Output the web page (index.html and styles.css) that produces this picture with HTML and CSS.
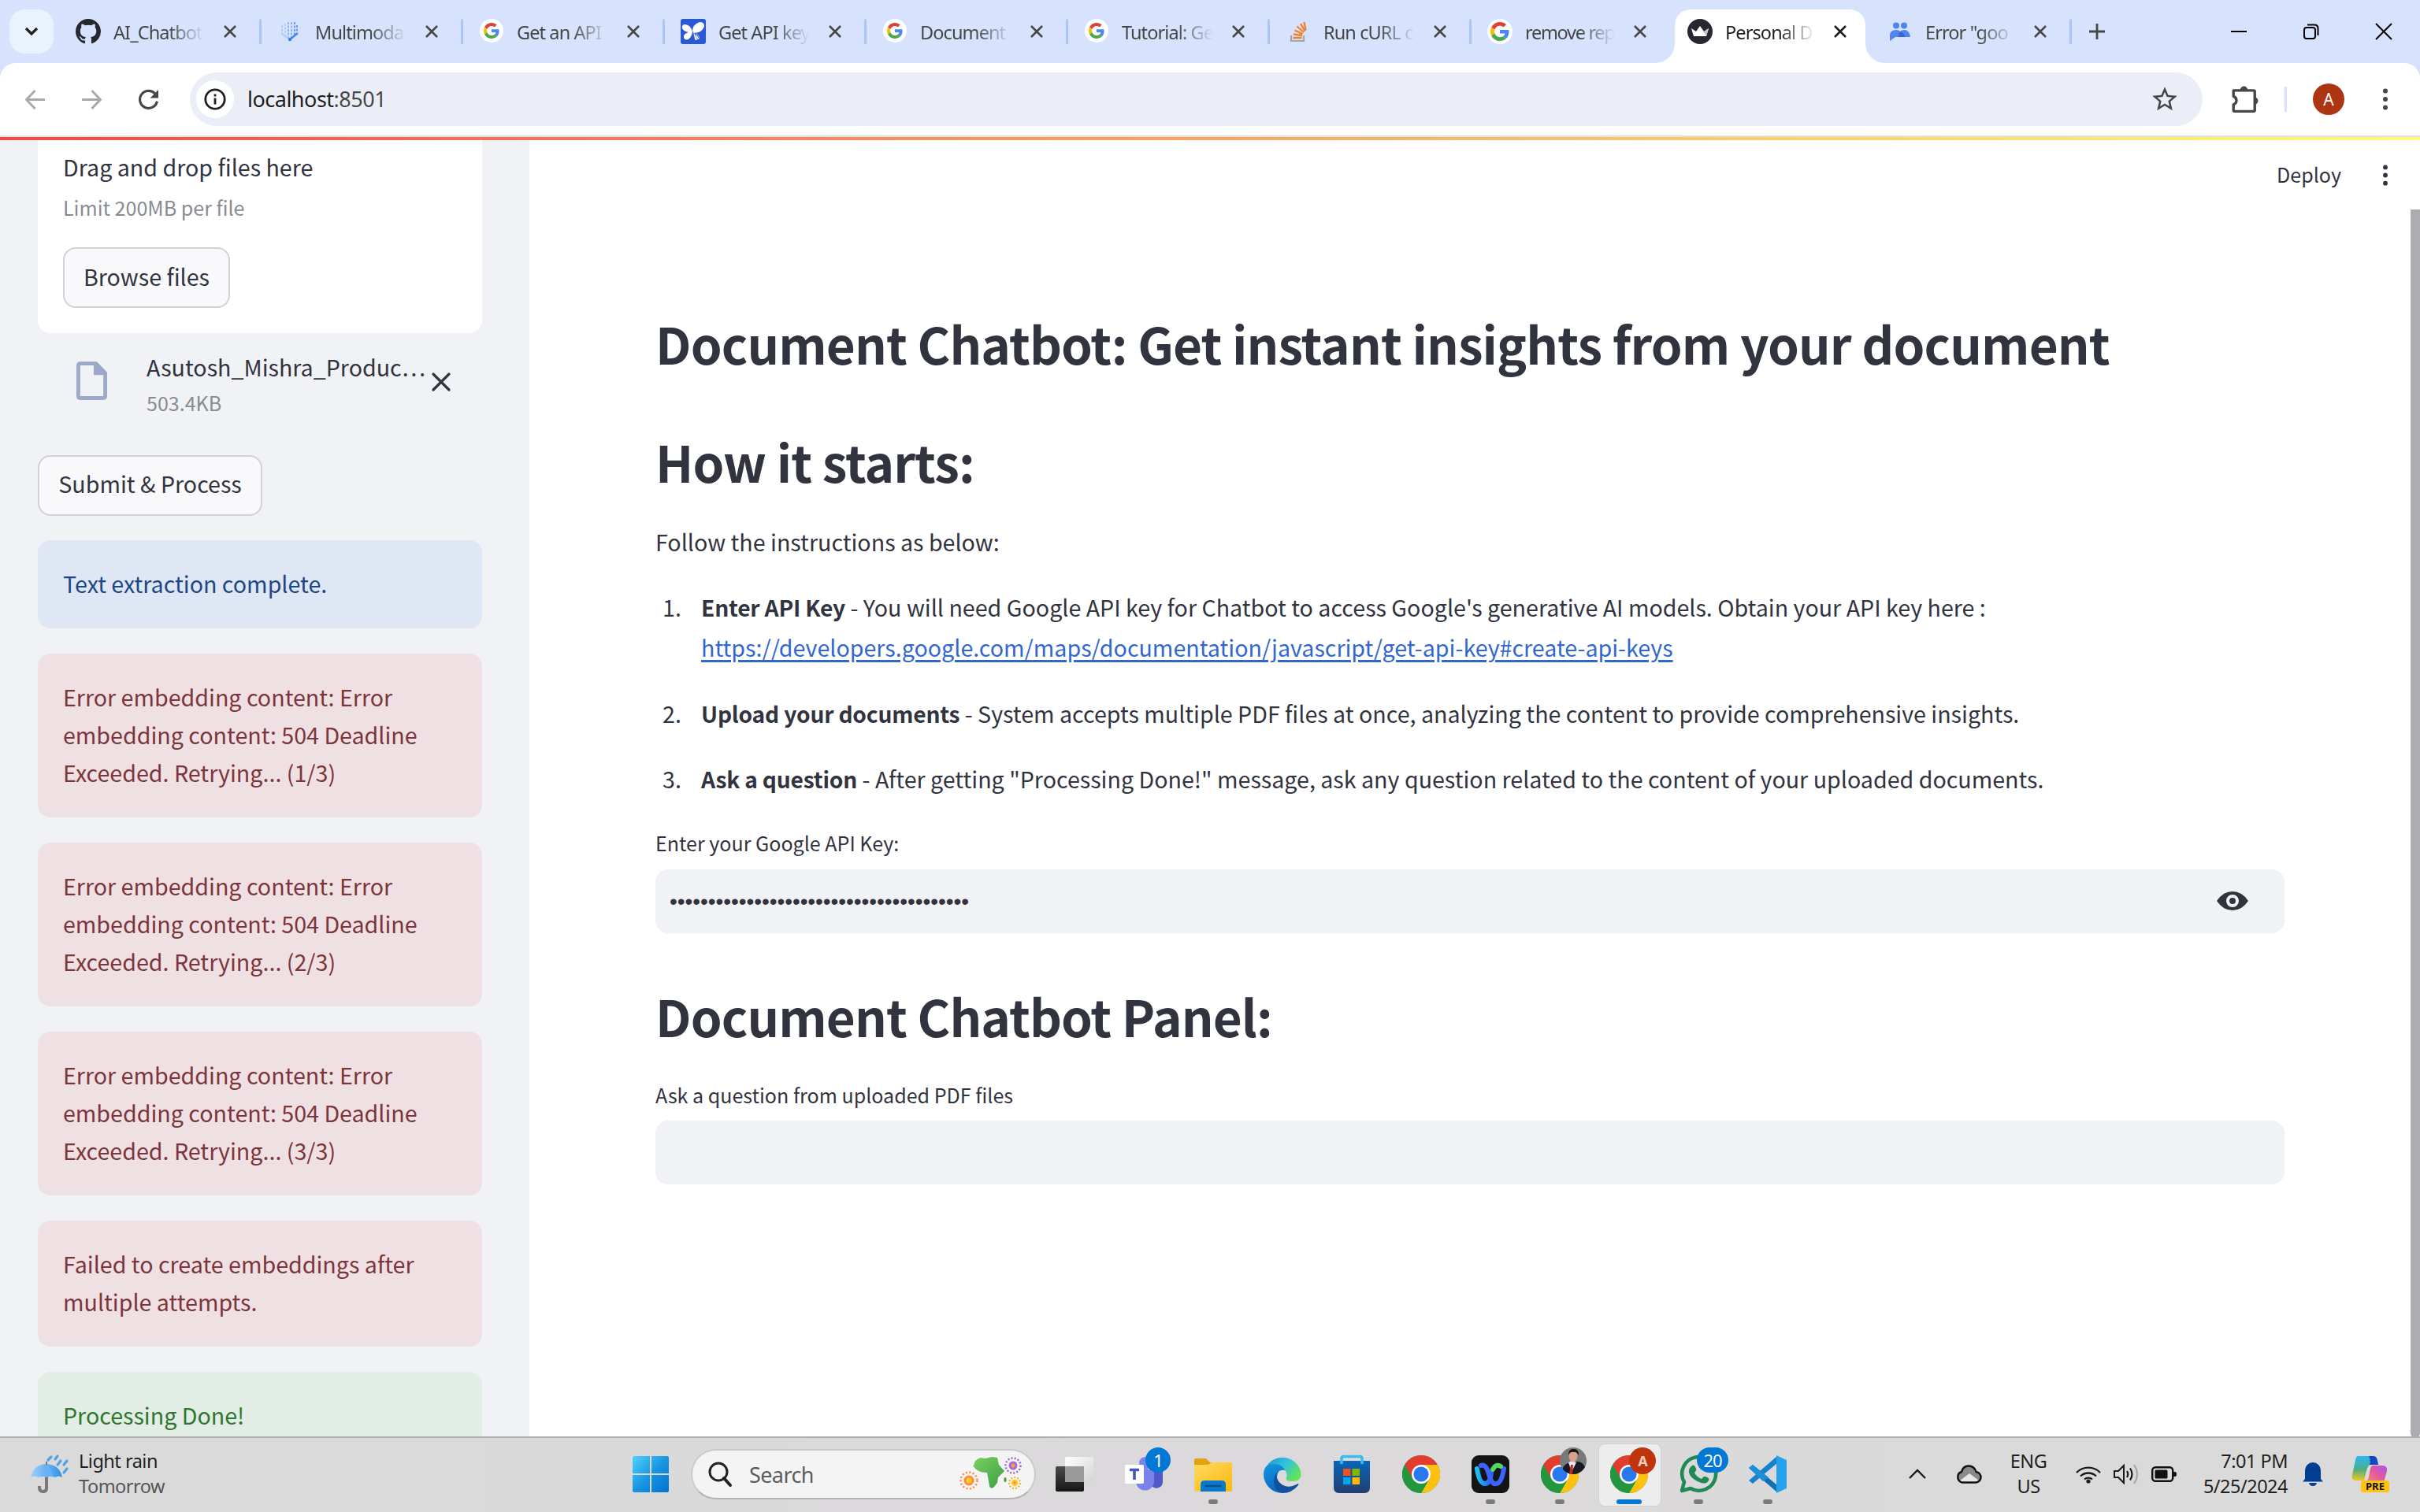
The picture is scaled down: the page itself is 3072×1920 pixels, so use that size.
FILE: index.html
```html
<!DOCTYPE html>
<html lang="en">
<head>
<meta charset="utf-8">
<title>Personal Document Chatbot</title>
<link rel="stylesheet" href="styles.css">
</head>
<body>
<svg class="defs" aria-hidden="true">
  <defs>
    <symbol id="x" viewBox="0 0 16 16"><path d="M1 1l14 14M15 1L1 15" fill="none" stroke="currentColor" stroke-width="2.6"/></symbol>
    <symbol id="google" viewBox="0 0 48 48">
      <path fill="#de4032" d="M24 9.5c3.54 0 6.71 1.22 9.21 3.6l6.85-6.85C35.9 2.38 30.47 0 24 0 14.62 0 6.51 5.38 2.56 13.22l7.98 6.19C12.43 13.72 17.74 9.5 24 9.5z"/>
      <path fill="#4a86f5" d="M46.98 24.55c0-1.57-.15-3.09-.38-4.55H24v9.02h12.94c-.58 2.96-2.26 5.48-4.78 7.18l7.73 6c4.51-4.18 7.09-10.36 7.09-17.65z"/>
      <path fill="#f7bb05" d="M10.53 28.59c-.48-1.45-.76-2.99-.76-4.59s.27-3.14.76-4.59l-7.98-6.19C.92 16.46 0 20.12 0 24c0 3.88.92 7.54 2.56 10.78l7.97-6.19z"/>
      <path fill="#4aa84e" d="M24 48c6.48 0 11.93-2.13 15.89-5.81l-7.73-6c-2.15 1.45-4.92 2.3-8.16 2.3-6.26 0-11.57-4.22-13.47-9.91l-7.98 6.19C6.51 42.62 14.62 48 24 48z"/>
    </symbol>
    <symbol id="google-disc" viewBox="0 0 32 32"><circle cx="16" cy="15" r="15" fill="#fff"/><use href="#google" x="6" y="5" width="20" height="20"/></symbol>
    <symbol id="chrome" viewBox="0 0 48 48">
      <circle cx="24" cy="24" r="24" fill="#1f9d48"/>
      <path d="M3.2 12A24 24 0 0 1 44.8 12H24L13.6 30z" fill="#e33b2e"/>
      <path d="M44.8 12A24 24 0 0 1 24 48L34.4 30 24 12z" fill="#fdc110"/>
      <path d="M3.2 12L13.6 30 24 36 34.4 30 24 48A24 24 0 0 1 3.2 12z" fill="#24963f"/>
      <circle cx="24" cy="24" r="12" fill="#fff"/><circle cx="24" cy="24" r="9.6" fill="#2a78ee"/>
    </symbol>
    <symbol id="dots" viewBox="0 0 6 28"><circle cx="3" cy="3.5" r="3" fill="currentColor"/><circle cx="3" cy="14" r="3" fill="currentColor"/><circle cx="3" cy="24.5" r="3" fill="currentColor"/></symbol>
    <linearGradient id="winG" x1="0" y1="0" x2="1" y2="1"><stop offset="0" stop-color="#4fd3ff"/><stop offset=".5" stop-color="#1896e2"/><stop offset="1" stop-color="#0072cf"/></linearGradient>
    <linearGradient id="darkG" x1="0" y1="0" x2="0" y2="1"><stop offset="0" stop-color="#4a4a4a"/><stop offset="1" stop-color="#161616"/></linearGradient>
    <linearGradient id="glassG" x1="0" y1="0" x2="1" y2="1"><stop offset="0" stop-color="#fff"/><stop offset="1" stop-color="#d4d4d4"/></linearGradient>
    <linearGradient id="folderG" x1="0" y1="0" x2="1" y2="1"><stop offset="0" stop-color="#ffdb60"/><stop offset="1" stop-color="#fbb710"/></linearGradient>
    <linearGradient id="edgeTop" x1="0" y1="0" x2="1" y2=".6"><stop offset="0" stop-color="#1d8ed6"/><stop offset=".55" stop-color="#33c3dc"/><stop offset="1" stop-color="#62e455"/></linearGradient>
    <linearGradient id="edgeMid" x1="0" y1="0" x2=".3" y2="1"><stop offset="0" stop-color="#1596de"/><stop offset="1" stop-color="#0a68c4"/></linearGradient>
    <linearGradient id="storeG" x1="0" y1="0" x2="0" y2="1"><stop offset="0" stop-color="#0767b9"/><stop offset="1" stop-color="#233e70"/></linearGradient>
    <linearGradient id="webexL" x1="0" y1="0" x2="1" y2="0"><stop offset="0" stop-color="#17c3f0"/><stop offset="1" stop-color="#2a5bff"/></linearGradient>
    <linearGradient id="copA" x1="0" y1="0" x2="0" y2="1"><stop offset="0" stop-color="#2bb7f2"/><stop offset=".55" stop-color="#4cae86"/><stop offset="1" stop-color="#f2c61c"/></linearGradient>
    <linearGradient id="copB" x1="1" y1="0" x2="0" y2="1"><stop offset="0" stop-color="#a455ee"/><stop offset=".5" stop-color="#e5599c"/><stop offset="1" stop-color="#fb8a62"/></linearGradient>
    <linearGradient id="africaG" x1="0" y1="0" x2="1" y2="1"><stop offset="0" stop-color="#78d35f"/><stop offset="1" stop-color="#3f9c45"/></linearGradient>
    <linearGradient id="umbG" x1="0" y1="0" x2="1" y2="0"><stop offset="0" stop-color="#9bd0fc"/><stop offset="1" stop-color="#2f92e8"/></linearGradient>
  </defs>
</svg>

<header class="tabstrip">
  <div class="tab-search"><svg width="18" height="12" viewBox="0 0 18 12"><path d="M2 2l7 7 7-7" fill="none" stroke="#1f1f1f" stroke-width="3.2"/></svg></div>
  <div class="tab"><svg class="fav" viewBox="0 0 16 16"><path fill="#24292f" d="M8 0C3.58 0 0 3.58 0 8c0 3.54 2.29 6.53 5.47 7.59.4.07.55-.17.55-.38 0-.19-.01-.82-.01-1.49-2.01.37-2.53-.49-2.69-.94-.09-.23-.48-.94-.82-1.13-.28-.15-.68-.52-.01-.53.63-.01 1.08.58 1.23.82.72 1.21 1.87.87 2.33.66.07-.52.28-.87.51-1.07-1.78-.2-3.64-.89-3.64-3.95 0-.87.31-1.59.82-2.15-.08-.2-.36-1.02.08-2.12 0 0 .67-.21 2.2.82.64-.18 1.32-.27 2-.27.68 0 1.36.09 2 .27 1.53-1.04 2.2-.82 2.2-.82.44 1.1.16 1.92.08 2.12.51.56.82 1.27.82 2.15 0 3.07-1.87 3.75-3.65 3.95.29.25.54.73.54 1.48 0 1.07-.01 1.93-.01 2.2 0 .21.15.46.55.38A8.013 8.013 0 0016 8c0-4.42-3.58-8-8-8z"/></svg><span class="tab-title">AI_Chatbot</span><svg class="tab-x"><use href="#x"/></svg></div>
  <div class="tab"><svg class="fav" viewBox="0 0 32 32"><g fill="none" stroke-width="2"><path d="M6 8v12M10 6v16" stroke="#b4ccfa" stroke-dasharray="3 1.5"/><path d="M14 4v20M18 4v20" stroke="#8fb3f8" stroke-dasharray="3 1.5"/><path d="M22 4v16M25 8v8" stroke="#6d9cf5" stroke-dasharray="3 1.5"/><path d="M6 19l10 7" stroke="#b4ccfa" stroke-width="2.4"/><path d="M26 18l-10 8" stroke="#4a85f1" stroke-width="2.600"/></g><circle cx="16" cy="26" r="2.2" fill="#3f7df0"/></svg><span class="tab-title">Multimoda</span><svg class="tab-x"><use href="#x"/></svg></div>
  <div class="tab"><svg class="fav"><use href="#google-disc"/></svg><span class="tab-title">Get an API</span><svg class="tab-x"><use href="#x"/></svg></div>
  <div class="tab"><svg class="fav" viewBox="0 0 32 32"><rect width="32" height="32" rx="3" fill="#2b59d4"/><g fill="#fff"><path d="M15 16Q13 8 6 7 1 7 2 12q2 4 8 5-7 2-6 7 3 5 8 0 3-4 3-8z"/><path d="M15 16Q15 7 24 4q6 0 6 5-1 5-7 8l-6 1 4 8q-1 2-3 0z"/><path d="M20 18l4 5q0 3-2 3-3-3-3-7z"/></g><path d="M15.500 16l2 11M19.500 18.500l4 6" stroke="#2b59d4" stroke-width="1.200" fill="none"/></svg><span class="tab-title">Get API key</span><svg class="tab-x"><use href="#x"/></svg></div>
  <div class="tab"><svg class="fav"><use href="#google-disc"/></svg><span class="tab-title">Document</span><svg class="tab-x"><use href="#x"/></svg></div>
  <div class="tab"><svg class="fav"><use href="#google-disc"/></svg><span class="tab-title">Tutorial: Ge</span><svg class="tab-x"><use href="#x"/></svg></div>
  <div class="tab"><svg class="fav" viewBox="0 0 32 32"><path d="M7 21v7h16v-7" fill="none" stroke="#a3a5a8" stroke-width="2.200"/><path d="M9.500 24h11M10 19.500l11 1.500M11.500 14.500l10 4.500M14.500 9.500l8.500 7.500M19 6l5.500 9.500M23.500 4l2 10.500" fill="none" stroke="#ee8027" stroke-width="2.300"/></svg><span class="tab-title">Run cURL c</span><svg class="tab-x"><use href="#x"/></svg></div>
  <div class="tab narrow plain"><svg class="fav" viewBox="0 0 32 32"><circle cx="16" cy="16" r="16" fill="#fff"/><use href="#google" x="4" y="4" width="24" height="24"/></svg><span class="tab-title tight">remove rep</span><svg class="tab-x"><use href="#x"/></svg></div>
  <div class="tab narrow plain active"><svg class="fav" viewBox="0 0 32 32"><circle cx="16" cy="16" r="16" fill="#262730"/><path d="M5 12l6 4 5-7 5 7 6-4-3 10H8z" fill="#fff"/><path d="M16 9l5 7 6-4-3 10z" fill="#c4c4c8"/></svg><span class="tab-title">Personal D</span><svg class="tab-x"><use href="#x"/></svg></div>
  <div class="tab narrow"><svg class="fav" viewBox="0 0 32 32"><g fill="#4f86ee"><circle cx="11" cy="8.500" r="4"/><circle cx="21" cy="8.500" r="4"/><path d="M3 28V20q1-6 8-6 4 0 5 2 2-2 5-2 7 0 8 9H10z"/></g><path d="M16 16q-2 3-2 7h9q-2-5-7-7z" fill="#3568d4"/></svg><span class="tab-title">Error "goo</span><svg class="tab-x"><use href="#x"/></svg></div>
  <svg class="new-tab" viewBox="0 0 20 20"><path d="M10 0v20M0 10h20" stroke="#444746" stroke-width="2.800"/></svg>
  <div class="win-controls">
    <svg width="20" height="20" viewBox="0 0 20 20"><path d="M0 10h20" stroke="#000" stroke-width="2"/></svg>
    <svg width="20" height="20" viewBox="0 0 20 20"><rect x="1" y="5" width="14" height="14" rx="3" fill="none" stroke="#000" stroke-width="2"/><path d="M5 1.500h9q4.500 0 4.500 4.500v9" fill="none" stroke="#000" stroke-width="2"/></svg>
    <svg width="20" height="20" viewBox="0 0 20 20"><path d="M0 0l20 20M20 0L0 20" stroke="#000" stroke-width="2"/></svg>
  </div>
</header>

<div class="toolbar-bg">
<nav class="toolbar">
  <svg class="nav-icon" viewBox="0 0 24 24"><path d="M24 12H2M12 1L1.500 12 12 23" fill="none" stroke="#a8aaa9" stroke-width="2.800"/></svg>
  <svg class="nav-icon" viewBox="0 0 24 24"><path d="M0 12h22M12 1l10.500 11L12 23" fill="none" stroke="#a8aaa9" stroke-width="2.800"/></svg>
  <svg class="nav-icon" viewBox="0 0 24 24"><path d="M22.500 14A10.600 10.600 0 1 1 20 4.800L23 8" fill="none" stroke="#444746" stroke-width="3"/><path d="M24 0v10H14z" fill="#444746"/></svg>
  <div class="omnibox">
    <span class="site-info"><svg width="28" height="28" viewBox="0 0 28 28"><circle cx="14" cy="14" r="12.200" fill="none" stroke="#1f1f1f" stroke-width="2.800"/><path d="M14 12.500v8M14 7.500v3" stroke="#1f1f1f" stroke-width="2.800"/></svg></span>
    <span class="url">localhost<span class="port">:8501</span></span>
    <svg class="star" viewBox="0 0 24 24"><path fill="#444746" fill-rule="evenodd" d="M22 9.240l-7.190-.62L12 2 9.190 8.630 2 9.240l5.460 4.730L5.820 21 12 17.270 18.180 21l-1.630-7.030L22 9.240zM12 15.400l-3.760 2.270 1-4.280-3.320-2.880 4.380-.38L12 6.100l1.710 4.040 4.380.38-3.320 2.880 1 4.280L12 15.400z"/></svg>
  </div>
  <svg class="puzzle" viewBox="0 0 34 34"><path d="M4 6.500h24q1.500 0 1.500 1.500v22q0 1.500-1.500 1.500H5.500Q4 31.500 4 30v-6.500a5.300 5.300 0 0 0 0-10z" fill="none" stroke="#444746" stroke-width="3.200" stroke-linejoin="round"/><path d="M12 6a4.500 4.500 0 0 1 9 0zM29 14.500a4.500 4.500 0 0 1 0 9z" fill="#444746"/></svg>
  <span class="bar-sep"></span>
  <span class="avatar">A</span>
  <svg class="menu-dots"><use href="#dots"/></svg>
</nav>
</div>
<div class="edge-line"></div>
<div class="run-line"></div>

<div class="app">
  <aside class="sidebar">
    <section class="dropzone">
      <p class="src drop-title">Drag and drop files here</p>
      <p class="src drop-limit">Limit 200MB per file</p>
      <button class="src btn browse">Browse files</button>
    </section>
    <div class="file">
      <svg class="file-icon" viewBox="0 0 40 50"><path d="M5 2.500h20.500L37.500 15v30q0 2.500-2.500 2.500H5Q2.500 47.500 2.500 45V5Q2.500 2.500 5 2.500z" fill="none" stroke="#9da9c8" stroke-width="5"/><path d="M22.500 2v15.500H38L25 2z" fill="#9da9c8"/></svg>
      <div class="file-text"><p class="src file-name">Asutosh_Mishra_Produc…</p><p class="src file-size">503.4KB</p></div>
      <svg class="file-x" viewBox="0 0 24 24"><path d="M2 2l20 20M22 2L2 22" stroke="#31333f" stroke-width="3.200" stroke-linecap="round"/></svg>
    </div>
    <button class="src btn submit">Submit &amp; Process</button>
    <div class="alerts">
      <div class="src alert info">Text extraction complete.</div>
      <div class="src alert error">Error embedding content: Error<br>embedding content: 504 Deadline<br>Exceeded. Retrying... (1/3)</div>
      <div class="src alert error">Error embedding content: Error<br>embedding content: 504 Deadline<br>Exceeded. Retrying... (2/3)</div>
      <div class="src alert error">Error embedding content: Error<br>embedding content: 504 Deadline<br>Exceeded. Retrying... (3/3)</div>
      <div class="src alert error">Failed to create embeddings after<br>multiple attempts.</div>
      <div class="src alert success">Processing Done!</div>
    </div>
  </aside>
  <main class="main">
    <div class="app-head"><span class="src deploy">Deploy</span><svg class="menu-dots dark"><use href="#dots"/></svg></div>
    <h2 class="src heading">Document Chatbot: Get instant insights from your document</h2>
    <h2 class="src heading how">How it starts:</h2>
    <p class="src body">Follow the instructions as below:</p>
    <ol class="src steps">
      <li><span class="num">1.</span><div><b>Enter API Key</b> - You will need Google API key for Chatbot to access Google's generative AI models. Obtain your API key here :<br><a href="#">https://developers.google.com/maps/documentation/javascript/get-api-key#create-api-keys</a></div></li>
      <li><span class="num">2.</span><div><b>Upload your documents</b> - System accepts multiple PDF files at once, analyzing the content to provide comprehensive insights.</div></li>
      <li><span class="num">3.</span><div><b>Ask a question</b> - After getting "Processing Done!" message, ask any question related to the content of your uploaded documents.</div></li>
    </ol>
    <label class="src label first">Enter your Google API Key:</label>
    <div class="field"><span class="secret">•••••••••••••••••••••••••••••••••••••••</span><svg class="eye" viewBox="0 0 40 24"><path d="M0 12Q8 0 20 0T40 12Q32 24 20 24T0 12z" fill="#31333f"/><circle cx="20" cy="12" r="6" fill="none" stroke="#f0f2f6" stroke-width="4"/></svg></div>
    <h2 class="src heading panel">Document Chatbot Panel:</h2>
    <label class="src label">Ask a question from uploaded PDF files</label>
    <div class="field"></div>
  </main>
  <div class="scrollbar"></div>
</div>

<footer class="taskbar">
  <div class="weather">
    <svg width="48" height="48" viewBox="0 0 48 48"><path d="M20 26v16q0 4-4.500 4t-4.500-5v-2" fill="none" stroke="#7d7876" stroke-width="4"/><path d="M0 28Q3 12 20 11q17 1 20 17-5-3-9 0-5-3-11 0-6-3-10 0-5-3-10 0z" fill="url(#umbG)"/><path d="M13 28q0-10 7-17 8 7 8 17-4-2-8 0-4-2-7 0z" fill="#6bb4f5" opacity=".7"/><path d="M20 8v4" stroke="#777" stroke-width="2"/><path d="M22 6l4-4M31 5l3-4M34 12l4-5M42 12l4-5M42 22l4-5" stroke="#4ca4ee" stroke-width="3.200" stroke-linecap="round"/></svg>
    <div class="two-line"><span>Light rain</span><span class="muted">Tomorrow</span></div>
  </div>
  <div class="apps">
    <svg class="start" width="46" height="46" viewBox="0 0 46 46"><path d="M2 0h20v22H0V2q0-2 2-2zM24 0h20q2 0 2 2v20H24zM0 24h22v22H2q-2 0-2-2zM24 24h22v20q0 2-2 2H24z" fill="url(#winG)"/></svg>
    <div class="search">
      <svg width="30" height="32" viewBox="0 0 30 32"><circle cx="13" cy="13" r="11" fill="none" stroke="#222" stroke-width="3"/><path d="M20 21l8 9" stroke="#222" stroke-width="4" stroke-linecap="round"/></svg>
      <span class="search-text">Search</span>
      <svg class="africa" width="80" height="44" viewBox="0 0 80 44"><path d="M18 11Q19 3 27 1l6 1 8-2 7 1 2 9 7 8-8 8-1 7-5 6q-4 2-5-2l-3-17q-13 0-18-9z" fill="url(#africaG)"/><ellipse cx="58" cy="29" rx="1.600" ry="3" fill="#3f9c45"/><g fill="none"><circle cx="12" cy="30" r="10.500" stroke="#ff8a45" stroke-width="2.500" stroke-dasharray="2 2.500"/><circle cx="12" cy="30" r="5" stroke="#ff8a3c" stroke-width="3" fill="#ffc928"/><circle cx="68" cy="11" r="9.500" stroke="#9a6bd6" stroke-width="2.500" stroke-dasharray="2 2.200"/><circle cx="68" cy="11" r="4" stroke="#a06be0" stroke-width="3" fill="#ff9f2e"/><circle cx="70" cy="33" r="7" stroke="#e9b722" stroke-width="2" stroke-dasharray="2 2"/><circle cx="70" cy="33" r="3" stroke="#ffc928" stroke-width="2.500" fill="#ff8a3c"/></g></svg>
    </div>
    <div class="app-cell"><svg viewBox="0 0 48 48"><rect x="0" y="14" width="36" height="32" rx="2" fill="url(#darkG)"/><rect x="12" y="2" width="36" height="32" rx="2" fill="url(#glassG)"/><path d="M12 14h24v20H14q-2 0-2-2z" fill="#9b9a9a"/></svg></div>
    <div class="app-cell"><svg viewBox="0 0 48 48"><path d="M34 20h14v14a8 8 0 0 1-14 5z" fill="#5059c9"/><circle cx="26" cy="10" r="8" fill="#7b83eb"/><path d="M14 18h23v15a11.500 11.500 0 0 1-23 0z" fill="#7b83eb"/><rect x="0" y="12" width="24" height="24" rx="2" fill="#fff"/><path d="M6 18.500h12M12 18v13" stroke="#4b53bc" stroke-width="3.600"/></svg><span class="badge">1</span></div>
    <div class="app-cell run"><svg viewBox="0 0 48 48"><path d="M2 4h13l5 5h26v6H0V6q0-2 2-2z" fill="#e3a30c"/><path d="M0 12h18l4-3h24q2 0 2 2v33q0 2-2 2H2q-2 0-2-2z" fill="url(#folderG)"/><path d="M8 46V37q0-5 5-5h22q5 0 5 5v9z" fill="#0c76c8"/><path d="M15 39h18" stroke="#064f8f" stroke-width="2.400" stroke-linecap="round"/></svg></div>
    <div class="app-cell"><svg viewBox="0 0 48 48"><path d="M1 20A24 24 0 0 1 47 20q3 13-11 13-9 0-7-5 2-4-2-9-7-8-17-3-6 3-9 4z" fill="url(#edgeTop)"/><path d="M0 24q0-13 14-13 9 0 13 8-9-2-10 8-1 10 9 17l-2 4A24 24 0 0 1 0 24z" fill="url(#edgeMid)"/><path d="M19 20q-5 5 0 13 7 9 18 6l7-3q1 0 0 2-8 10-20 10-10-2-11-14 0-9 6-14z" fill="#12519f"/></svg></div>
    <div class="app-cell"><svg viewBox="0 0 48 48"><path d="M1 7h46v34q0 7-7 7H8q-7 0-7-7z" fill="url(#storeG)"/><path d="M11 11V4q0-2.500 3-2.500h20q3 0 3 2.500v7" fill="none" stroke="#35bdf3" stroke-width="3.600"/><path d="M13 17h9.500v9H13z" fill="#f25022"/><path d="M24.500 17H34v9h-9.500z" fill="#7fba00"/><path d="M13 28h9.500v9H13z" fill="#00a4ef"/><path d="M24.500 28H34v9h-9.500z" fill="#ffb900"/></svg></div>
    <div class="app-cell"><svg><use href="#chrome"/></svg></div>
    <div class="app-cell run"><svg viewBox="0 0 48 48"><rect width="48" height="48" rx="9" fill="#141414"/><g fill="none" stroke-width="6" stroke-linecap="round"><path d="M7 17Q10 36 17 36T25 22" stroke="url(#webexL)"/><path d="M12 13Q18 10 22 24T31 36Q38 36 41 17" stroke="#3d63ff"/><path d="M27 18Q31 10 37 14" stroke="#4fd867"/></g></svg></div>
    <div class="app-cell run"><svg><use href="#chrome"/></svg><svg class="photo" viewBox="0 0 34 34"><defs><clipPath id="pc"><circle cx="17" cy="17" r="17"/></clipPath></defs><g clip-path="url(#pc)"><rect width="34" height="34" fill="#777a79"/><path d="M2 34q1-13 11-15l11-1q9 2 10 16z" fill="#181b22"/><path d="M11 19l4-2 6 2-6 12z" fill="#e8eaf0"/><path d="M14 22l3 0-1 12h-4z" fill="#bd2a25"/><ellipse cx="17" cy="11" rx="5.500" ry="7.500" fill="#d9a08c"/><path d="M11 10q0-9 7-8 6 0 6 8-3-5-6-4-5-1-7 4z" fill="#151312"/></g></svg></div>
    <div class="app-cell run current"><svg><use href="#chrome"/></svg><span class="badge user">A</span></div>
    <div class="app-cell run"><svg viewBox="0 0 48 48"><path d="M3 45l3-11A21.500 21.500 0 1 1 14 42z" fill="none" stroke="#1f8a54" stroke-width="4.600" stroke-linejoin="round"/><path d="M16 13q3-2 5 4 1 2-2 5 3 6 9 8 3-4 5-3 6 2 4 5-3 6-12 2-14-6-13-15 1-4 4-6z" fill="#1f8a54"/></svg><span class="badge wide">20</span></div>
    <div class="app-cell run"><svg viewBox="0 0 48 48"><path d="M0 32l5 4L36 10V1z" fill="#1583cc"/><path d="M0 16l5-4 31 26v9z" fill="#0f70b6"/><path d="M0 16l5-4 20 16-7 5z" fill="#1c8fd8"/><path d="M35 0l13 6v36l-13 6z" fill="#27a3ee"/></svg></div>
  </div>
  <div class="tray">
    <svg class="caret" width="22" height="12" viewBox="0 0 22 12"><path d="M1 11L11 1l10 10" fill="none" stroke="#1a1a1a" stroke-width="2.400"/></svg>
    <svg class="cloud" width="32" height="24" viewBox="0 0 32 24"><path d="M8 22.500a7 7 0 0 1-1-13.500Q9 1.500 16 1.500T25.500 9a6.700 6.700 0 0 1-1.500 13.500z" fill="#8a8a8a"/><path d="M5 20l12-9 12 9-4 2H8z" fill="#e8e8e8"/><path d="M8 22.500a7 7 0 0 1-1-13.500Q9 1.500 16 1.500T25.500 9a6.700 6.700 0 0 1-1.500 13.500z" fill="none" stroke="#111" stroke-width="2.400"/></svg>
    <div class="two-line lang"><span>ENG</span><span>US</span></div>
    <svg class="wifi" width="32" height="24" viewBox="0 0 32 24"><g fill="none" stroke="#1a1a1a" stroke-width="2.300"><path d="M1 10a21 21 0 0 1 30 0M6 14.500a14.500 14.500 0 0 1 20 0M11 18.500a7.500 7.500 0 0 1 10 0"/></g><circle cx="16" cy="21" r="2.600" fill="#1a1a1a"/></svg>
    <svg class="vol" width="32" height="26" viewBox="0 0 32 26"><path d="M1 9h5l7-7v22l-7-7H1z" fill="none" stroke="#1a1a1a" stroke-width="2"/><path d="M17 9q2.500 4 0 8M21 5.500q5 7.500 0 15" fill="none" stroke="#1a1a1a" stroke-width="2.200"/><path d="M26 1q8 12 0 24" fill="none" stroke="#a5a5a5" stroke-width="2"/></svg>
    <svg class="batt" width="32" height="20" viewBox="0 0 32 20"><rect x="1.200" y="1.200" width="26" height="17.600" rx="4" fill="none" stroke="#111" stroke-width="2.400"/><rect x="4.500" y="4.500" width="16" height="11" rx="1.500" fill="#111"/><path d="M28 7h2q2 0 2 3t-2 3h-2z" fill="#111"/></svg>
    <div class="two-line clock"><span>7:01 PM</span><span>5/25/2024</span></div>
    <svg class="bell" width="26" height="30" viewBox="0 0 26 30"><path d="M3 21V10a10 10 0 0 1 20 0v11l3 3.500H0zM8 26h10q-1 4-5 4t-5-4z" fill="#003e92"/></svg>
    <div class="copilot"><svg width="46" height="34" viewBox="0 0 46 34"><path d="M8 0h20q4 0 5 6l1 5H24q-3 0-5 8l-3 12H6Q-1 31 1 24L5 5q1-5 3-5z" fill="url(#copA)"/><path d="M22 0h6q4 0 5 6l1 5H23q2-6-1-11z" fill="#1544c4"/><path d="M27 12h12q7 0 6 7l-4 14H17q4-1 5-7l2-10q1-4 3-4z" fill="url(#copB)"/></svg><span class="pre">PRE</span></div>
  </div>
</footer>
</body>
</html>
```
FILE: styles.css
```css
* { box-sizing: border-box; margin: 0; padding: 0; }
html, body { width: 3072px; height: 1920px; overflow: hidden; }
body { display: flex; flex-direction: column; background: #fff; font-family: "Noto Sans", "Open Sans", sans-serif; color: #1f1f1f; }
svg { display: block; flex: none; overflow: visible; }
.defs { position: absolute; width: 0; height: 0; }
.src { font-family: "Noto Sans CJK SC", "Source Sans Pro", sans-serif; font-size: 28.640px; line-height: 48px; color: #31333f; white-space: nowrap; }

/* browser tabs */
.tabstrip { height: 80px; flex: none; display: flex; align-items: center; background: #d7e2fd; padding-left: 12px; }
.tab-search { width: 56px; height: 56px; border-radius: 20px; background: #eaf1ff; display: flex; align-items: center; justify-content: center; margin-right: 8px; }
.tab { width: 256px; height: 80px; flex: none; display: flex; align-items: center; padding-left: 20px; position: relative; color: #444746; }
.tab.narrow { width: 254px; }
.tab::after { content: ""; width: 3px; height: 32px; border-radius: 2px; background: #a8c4fb; margin-left: auto; }
.tab.plain::after { visibility: hidden; }
.fav { width: 32px; height: 32px; margin-right: 16px; }
.tab-title { width: 116px; overflow: hidden; white-space: nowrap; font-size: 23.500px; letter-spacing: -0.9px; line-height: 40px; padding-top: 2px; -webkit-mask-image: linear-gradient(90deg, #000 60%, transparent); mask-image: linear-gradient(90deg, #000 60%, transparent); }
.narrow .tab-title { width: 114px; }
.tab-title.tight { letter-spacing: -1.3px; }
.tab-x { width: 16px; height: 16px; margin-left: 24px; }
.tab.active { color: #1f1f1f; z-index: 0; }
.tab.active::before { content: ""; position: absolute; z-index: -1; left: 4px; right: 8px; top: 12px; bottom: 0; background: #fff; border-radius: 20px 20px 0 0; }
.tab.active::after { visibility: visible; position: absolute; z-index: -1; left: -20px; right: -16px; bottom: 0; width: auto; height: 24px; border-radius: 0; background: radial-gradient(circle at 0 0, transparent 23.500px, #fff 24px) left / 24px 24px no-repeat, radial-gradient(circle at 100% 0, transparent 23.500px, #fff 24px) right / 24px 24px no-repeat; }
.new-tab { width: 20px; height: 20px; margin-left: 22px; }
.win-controls { margin-left: auto; display: flex; gap: 72px; padding-right: 36px; }

/* toolbar */
.toolbar-bg { flex: none; background: #d7e2fd; }
.toolbar { height: 92px; display: flex; align-items: center; background: #fff; border-radius: 20px 20px 0 0; padding-left: 32px; }
.nav-icon { width: 25px; height: 25px; margin-right: 47px; }
.omnibox { width: 2555px; height: 68px; border-radius: 34px; background: #ebeef7; display: flex; align-items: center; padding: 0 34px 0 8px; margin-left: -7px; }
.site-info { width: 48px; height: 48px; border-radius: 50%; background: #fff; display: flex; align-items: center; justify-content: center; }
.url { margin-left: 17px; font-size: 27px; letter-spacing: -0.5px; line-height: 40px; }
.port { color: #474747; }
.star { width: 38px; height: 38px; margin-left: auto; margin-right: -5px; }
.puzzle { width: 36px; height: 36px; margin-left: 35px; }
.bar-sep { width: 3px; height: 32px; background: #d3e1fb; margin-left: 33px; }
.avatar { width: 40px; height: 40px; border-radius: 50%; background: #ae3511; color: #fff; display: flex; align-items: center; justify-content: center; font-size: 21px; margin-left: 33px; }
.menu-dots { width: 6px; height: 28px; margin-left: 49px; color: #444746; }
.menu-dots.dark { color: #31333f; height: 27px; margin-left: 53px; }
.edge-line { height: 2px; flex: none; background: #dfe3df; }
.run-line { height: 4px; flex: none; background: linear-gradient(90deg, #ec4b4b, #f18a5f 33%, #f7c26d 66%, #fdfa80); }

/* page */
.app { height: 1646px; flex: none; display: flex; overflow: hidden; }
.sidebar { width: 672px; flex: none; background: #f0f2f6; padding: 0 60px 0 48px; overflow: hidden; }
.dropzone { height: 245px; background: #fff; border-radius: 0 0 16px 16px; padding: 10px 32px 0; }
.drop-limit { font-size: 25.060px; line-height: 42px; margin-top: 6px; }
.drop-limit, .file-size { color: #898b92; }
.btn { display: flex; align-items: center; justify-content: center; border: 2px solid #d1d2d6; background: #f9f9fb; border-radius: 16px; height: 77px; padding-bottom: 3px; }
.browse { width: 212px; margin-top: 30px; }
.file { display: flex; height: 155px; padding: 19px 0 0 49px; }
.file-icon { width: 39px; height: 49px; margin-top: 17px; }
.file-text { margin-left: 50px; width: 360px; }
.file-size { font-size: 25.060px; line-height: 42px; }
.file-x { width: 24px; height: 24px; margin: 31px 0 0 2px; }
.submit { width: 285px; padding-bottom: 5px; }
.alerts { margin-top: 31px; display: flex; flex-direction: column; gap: 32px; }
.alert { border-radius: 16px; padding: 31px 32px 33px; }
.info { background: #dfe6f4; color: #1c4786; }
.error { background: #efe0e3; color: #7d353b; }
.success { background: #e2ede5; color: #2f772f; }

.main { width: 2388px; flex: none; padding: 0 160px; }
.app-head { height: 88px; margin-right: -160px; display: flex; align-items: center; justify-content: flex-end; padding: 0 29px 0 0; }
.deploy { font-size: 25.060px; margin-top: -2px; }
.heading { font-size: 63.800px; line-height: 86px; font-weight: 700; letter-spacing: -0.900px; margin-top: 126px; }
.how { margin-top: 64px; }
.body { line-height: 51.200px; margin-top: 34px; }
.steps { list-style: none; line-height: 51.200px; margin-top: 32px; display: flex; flex-direction: column; gap: 32px; }
.steps li { display: flex; }
.num { width: 58px; padding-left: 9px; }
.steps b { font-size: 28.200px; line-height: 1; font-weight: 700; letter-spacing: -0.200px; }
.steps a { color: #3267cf; text-decoration: underline; text-decoration-thickness: 3px; text-underline-offset: 4px; }
.label { display: block; font-size: 25.060px; line-height: 42px; margin-top: 35px; }
.field { width: 2068px; height: 81px; border-radius: 16px; background: #f0f2f6; margin-top: 13px; display: flex; align-items: center; padding: 0 46px 0 18px; }
.secret { font-family: "Liberation Sans", Arial, sans-serif; font-size: 28px; line-height: 48px; letter-spacing: -0.060px; color: #31333f; }
.eye { width: 40px; height: 24px; margin: 0 0 1px auto; }
.panel { margin-top: 61px; }
.panel + .label { margin-top: 37px; }
.panel + .label + .field { margin-top: 12px; }
.scrollbar { width: 12px; height: 1560px; margin-top: 88px; background: #acadb1; border-radius: 0 0 6px 6px; }

/* taskbar */
.taskbar { height: 96px; flex: none; border-top: 2px solid #adadad; background: linear-gradient(90deg, #dadada 20%, #dcd9dc 45%, #dbd9da 68%, #dadada 78%); padding-bottom: 2px; display: flex; align-items: center; }
.two-line { display: flex; flex-direction: column; font-size: 23.500px; line-height: 32px; letter-spacing: -0.5px; white-space: nowrap; margin-top: -2px; }
.weather { width: 803px; padding-left: 39px; display: flex; align-items: center; gap: 13px; }
.muted { color: #555; }
.apps { display: flex; align-items: center; height: 92px; }
.search { width: 438px; height: 64px; margin: 0 5px 0 28px; border-radius: 32px; background: #f4f4f4; border: 2px solid #cbcacb; border-bottom-color: #b4b3b4; display: flex; align-items: center; padding: 0 15px 0 20px; }
.search-text { font-size: 27px; letter-spacing: -0.6px; margin-left: 22px; color: #5c5c5c; }
.africa { margin-left: auto; }
.app-cell { width: 88px; height: 92px; display: flex; align-items: center; justify-content: center; position: relative; }
.app-cell > svg { width: 48px; height: 48px; }
.app-cell.run::after { content: ""; position: absolute; left: 38px; bottom: 8px; width: 12px; height: 6px; border-radius: 3px; background: #7c7b7c; }
.app-cell.current::before { content: ""; position: absolute; left: 5px; top: 7px; width: 78px; height: 78px; border-radius: 8px; background: #ededed; border: 1px solid #d2d1d2; }
.app-cell.current > svg { position: relative; }
.app-cell.current::after { left: 28px; width: 32px; background: #0078d4; }
.badge { position: absolute; left: 46px; top: 12px; width: 32px; height: 32px; border-radius: 16px; background: #0078d4; color: #fff; font-size: 22px; line-height: 32px; text-align: center; letter-spacing: -1px; }
.badge.wide { left: 42px; width: 40px; }
.badge.user { left: 44px; width: 34px; height: 34px; border-radius: 17px; background: #c0340c; color: #f0cdbc; font-weight: 700; font-size: 18px; line-height: 34px; }
.app-cell > .photo { position: absolute; left: 44px; top: 12px; width: 34px; height: 34px; }
.tray { margin-left: auto; display: flex; align-items: center; padding-right: 39px; }
.cloud { margin-left: 38px; }
.lang { margin-left: 37px; width: 46px; align-items: center; }
.wifi { margin-left: 37px; }
.vol { margin-left: 16px; }
.batt { margin-left: 16px; }
.clock { width: 141px; align-items: flex-end; }
.bell { margin-left: 19px; }
.copilot { width: 48px; height: 46px; margin-left: 36px; position: relative; }
.pre { position: absolute; right: 0; bottom: 0; width: 36px; height: 15px; border-radius: 3px; background: #ffc20e; color: #111; font-size: 13px; font-weight: 700; line-height: 15px; text-align: center; }
```
